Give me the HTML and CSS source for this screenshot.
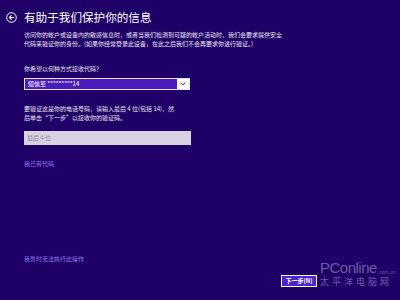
FILE: index.html
```html
<!DOCTYPE html>
<html lang="zh-CN">
<head>
<meta charset="utf-8">
<link rel="stylesheet" href="styles.css">
</head>
<body>
<div class="page">
  <header class="header">
    <svg class="back" viewBox="0 0 22 22" width="11" height="11">
      <circle cx="11" cy="11" r="9.6" fill="none" stroke="#fff" stroke-width="2"/>
      <path d="M15.5 11H7M10.5 7.2L6.8 11l3.7 3.8" fill="none" stroke="#fff" stroke-width="2.2" stroke-linecap="round" stroke-linejoin="round"/>
    </svg>
    <h1 class="title">有助于我们保护你的信息</h1>
  </header>
  <p class="text intro">访问你的帐户或设备内的敏感信息时，或者当我们检测到可疑的帐户活动时，我们会要求提供安全<br>代码来验证你的身份。(如果你经常登录此设备，在此之后我们不会再要求你进行验证。)</p>
  <p class="text label">你希望以何种方式接收代码？</p>
  <div class="select">
    <span class="select-value">短信至 *********14</span>
    <span class="select-arrow">
      <svg viewBox="0 0 10 6" width="6" height="4"><path d="M1 1l4 3.5L9 1" fill="none" stroke="#333" stroke-width="1.6"/></svg>
    </span>
  </div>
  <p class="text verify">要验证这是你的电话号码，请输入最后 4 位(包括 14)，然<br>后单击“下一步”以接收你的验证码。</p>
  <div class="input">最后 4 位</div>
  <a class="link have-code">我已有代码</a>
  <div class="spacer"></div>
  <a class="link cant">我暂时无法执行此操作</a>
  <div class="footer">
    <button class="next">下一步(N)</button>
  </div>
</div>
<div class="watermark">
  <div class="wm-top"><span class="wm-logo">PConline</span><span class="wm-dom">.com.cn</span></div>
  <div class="wm-cn">太平洋电脑网</div>
</div>
</body>
</html>
```
FILE: styles.css
```css
html, body {
  margin: 0;
  padding: 0;
}
body {
  width: 400px;
  height: 300px;
  background: #1f0066;
  color: #fff;
  font-family: "Noto Sans CJK SC", "Noto Sans", sans-serif;
  overflow: hidden;
  position: relative;
}
.page {
  height: 300px;
  box-sizing: border-box;
  display: flex;
  flex-direction: column;
  padding: 11px 0 0 24px;
}
.header {
  display: flex;
  align-items: center;
  margin-left: -18px;
  gap: 7px;
}
.back {
  display: block;
}
.title {
  margin: 0;
  font-size: 11.6px;
  line-height: 12px;
  font-weight: normal;
}
.text {
  margin: 0;
  font-size: 6px;
  line-height: 9px;
  color: #e8e4f4;
  white-space: nowrap;
}
.intro {
  margin-top: 7px;
}
.label {
  margin-top: 16px;
}
.select {
  margin-top: 5px;
  width: 166px;
  height: 12px;
  box-sizing: border-box;
  border: 1px solid #e6e0f5;
  display: flex;
}
.select-value {
  flex: 1;
  background: #4a1cbb;
  font-size: 6px;
  line-height: 10px;
  padding-left: 3px;
  color: #fff;
}
.select-arrow {
  width: 12px;
  background: #fff;
  display: flex;
  align-items: center;
  justify-content: center;
}
.select-arrow svg {
  display: block;
}
.verify {
  margin-top: 14px;
}
.input {
  margin-top: 9px;
  width: 167px;
  height: 14px;
  box-sizing: border-box;
  background: #d6d2e2;
  color: #8f8aa3;
  font-size: 6px;
  line-height: 14px;
  padding-left: 3px;
}
.link {
  font-size: 6px;
  line-height: 9px;
  color: #9478f0;
  display: block;
}
.have-code {
  margin-top: 14px;
}
.spacer {
  flex: 1;
}
.cant {
  margin-bottom: 12px;
}
.footer {
  display: flex;
  justify-content: flex-end;
  padding-right: 83px;
  margin-bottom: 13px;
}
.next {
  width: 36px;
  height: 12px;
  padding: 0;
  box-sizing: border-box;
  border: 1px solid #fff;
  background: #4f23c9;
  color: #fff;
  font-family: "Noto Sans CJK SC", sans-serif;
  font-size: 6px;
  line-height: 10px;
  font-weight: bold;
}
.watermark {
  position: absolute;
  left: 320px;
  top: 259px;
  color: rgba(190, 182, 225, 0.5);
  font-family: "Liberation Sans", Arial, sans-serif;
  pointer-events: none;
}
.wm-top {
  display: flex;
  align-items: flex-end;
}
.wm-logo {
  font-size: 15px;
  line-height: 17px;
  letter-spacing: -0.5px;
}
.wm-dom {
  font-size: 5px;
  line-height: 7px;
  margin-left: 1px;
}
.wm-cn {
  font-family: "Noto Sans CJK SC", sans-serif;
  font-size: 9px;
  line-height: 12px;
  letter-spacing: 3px;
}
```
